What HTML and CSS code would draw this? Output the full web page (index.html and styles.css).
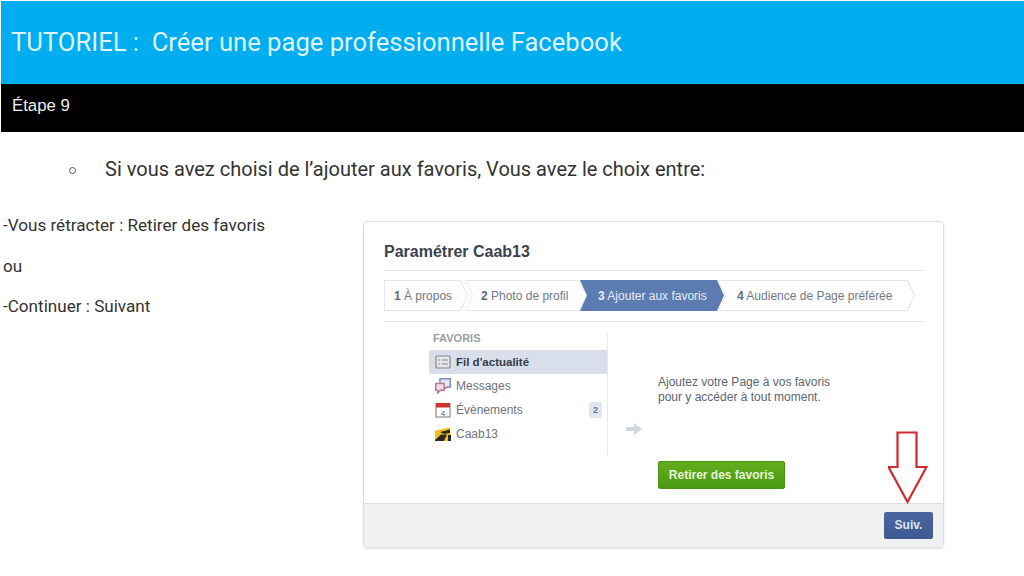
FILE: index.html
```html
<!DOCTYPE html>
<html lang="fr">
<head>
  <meta charset="UTF-8">
  <title>TUTORIEL : Créer une page professionnelle Facebook</title>
  <link rel="stylesheet" href="styles.css">
</head>
<body>
  <header class="title-bar">TUTORIEL :&nbsp; Créer une page professionnelle Facebook</header>
  <div class="step-bar">Étape 9</div>

  <p class="lead"><span class="bullet"></span>Si vous avez choisi de l’ajouter aux favoris, Vous avez le choix entre:</p>

  <main class="content">
    <div class="notes">
      <p>-Vous rétracter : Retirer des favoris</p>
      <p>ou</p>
      <p>-Continuer : Suivant</p>
    </div>

    <!-- Facebook dialog capture -->
    <div class="dialog">
      <div class="dialog-body">
        <h2 class="dialog-title">Paramétrer Caab13</h2>

        <ol class="steps">
          <li class="step step-1"><b>1</b> À propos</li>
          <li class="step step-2"><b>2</b> Photo de profil</li>
          <li class="step step-3"><b>3</b> Ajouter aux favoris</li>
          <li class="step step-4"><b>4</b> Audience de Page préférée</li>
        </ol>

        <div class="panel">
          <div class="side">
            <div class="side-head">FAVORIS</div>
            <div class="side-row selected">
              <svg class="side-icon" viewBox="0 0 16 16"><rect x="1" y="2" width="14" height="12" rx="1" fill="#e6e8ec" stroke="#85888e" stroke-width="1.200"/><path d="M3 6h2M3 10h2M6.500 6H13M6.500 10H13" stroke="#85888e"/></svg>
              <strong>Fil d'actualité</strong>
            </div>
            <div class="side-row">
              <svg class="side-icon" viewBox="0 0 16 16"><path d="M5 .8h10.200v8.400H11.500L9 11.500V9.200H5z" fill="#e6e9f4" stroke="#7f8cc0" stroke-width="1.500"/><path d="M.8 5.500h8.400v6.700H5.500L2.800 15v-2.800h-2z" fill="#f3dde5" stroke="#bb7d94" stroke-width="1.500"/></svg>
              Messages
            </div>
            <div class="side-row">
              <svg class="side-icon" viewBox="0 0 16 16"><rect x="1" y="1.500" width="14" height="13.500" fill="#fff" stroke="#70747c"/><rect x="1" y="1" width="14" height="4.500" fill="#c8352e"/><text x="8" y="13.500" class="cal-day">4</text></svg>
              Évènements
              <span class="count">2</span>
            </div>
            <div class="side-row">
              <svg class="side-icon" viewBox="0 0 16 16"><path d="M0 4.500 15 1.500 16 15H0z" fill="#f2c11d"/><path d="M0 14l6-5.500h6L9 15H0z" fill="#2a2a22"/><path d="M5 6l10-2.500V7L9 8z" fill="#2a2a22"/><path d="M13 9h3v6h-3z" fill="#2a2a22"/></svg>
              Caab13
            </div>
          </div>

          <div class="main-pane">
            <svg class="pane-arrow" viewBox="0 0 16 12"><path d="M0 4h8V0l8 6-8 6V8H0z" fill="#d3d6da"/></svg>
            <div class="pane-text">
              <p>Ajoutez votre Page à vos favoris<br>pour y accéder à tout moment.</p>
              <span class="btn-green">Retirer des favoris</span>
            </div>
          </div>
        </div>
      </div>

      <div class="dialog-foot">
        <span class="btn-next">Suiv.</span>
      </div>

      <svg class="red-arrow" viewBox="0 0 40 74"><path d="M9.500 1.500h19v34.500h10L19.500 71 .500 36h9z" fill="none" stroke="#cf2a32" stroke-width="2.200"/></svg>
    </div>
  </main>
</body>
</html>
```

FILE: styles.css
```css
* {
  box-sizing: border-box;
}

body {
  margin: 0;
  width: 1024px;
  height: 576px;
  overflow: hidden;
  background: #fff;
  color: #333;
  font-family: Roboto, "Liberation Sans", sans-serif;
}

.title-bar {
  height: 84px;
  margin: 1px 0 0 1px;
  padding-left: 10px;
  background: #00adee;
  color: #dff4fd;
  font-size: 25.600px;
  line-height: 82px;
}

.step-bar {
  height: 48px;
  margin-left: 1px;
  margin-top: -1px;
  padding-left: 11px;
  background: #000;
  color: #eee;
  font-family: "Liberation Sans", Arial, sans-serif;
  font-size: 16.800px;
  line-height: 43px;
}

.lead {
  display: flex;
  align-items: center;
  margin: 24px 0 0 69px;
  font-size: 20px;
  line-height: 26px;
}

.bullet {
  width: 7px;
  height: 7px;
  margin: 2px 29px 0 0;
  border: 1px solid #555;
  border-radius: 50%;
}

.content {
  display: flex;
  margin-top: 20px;
}

.notes {
  width: 363px;
  padding: 14px 0 0 3px;
  font-size: 17.100px;
}

.notes p {
  margin: 0 0 22px;
  line-height: 19px;
}

.notes p + p + p {
  margin-top: -1px;
}

.dialog {
  position: relative;
  width: 581px;
  height: 327px;
  margin-top: 19px;
  border: 1px solid #dcdee0;
  border-radius: 4px;
  box-shadow: 0 1px 2px rgba(0, 0, 0, 0.12);
}

.dialog-body {
  height: 281px;
  padding: 20px 20px 0;
}

.dialog-title {
  margin: 0;
  height: 29px;
  border-bottom: 1px solid #e2e3e6;
  color: #3b4250;
  font-family: "Liberation Sans", Arial, sans-serif;
  font-size: 16px;
  font-weight: bold;
  line-height: 19px;
}

.steps {
  display: flex;
  height: 31px;
  margin: 9px 0 0;
  padding: 0;
  list-style: none;
  font-family: "Liberation Sans", Arial, sans-serif;
  font-size: 12px;
  line-height: 33px;
  color: #737984;
}

/* chevrons: outer shape gives the border, ::before fills it */
.step {
  --notch: 7px;
  position: relative;
  z-index: 0;
  height: 31px;
  background: #e3e6ee;
  white-space: nowrap;
  clip-path: polygon(0 0, calc(100% - 7px) 0, 100% 50%, calc(100% - 7px) 100%, 0 100%, var(--notch) 50%);
}

.step::before {
  content: "";
  position: absolute;
  z-index: -1;
  inset: 1px;
  background: #fff;
  clip-path: polygon(0 0, calc(100% - 7px) 0, 100% 50%, calc(100% - 7px) 100%, 0 100%, var(--notch) 50%);
}

.step b {
  color: #5a6a8c;
}

.step-1 {
  --notch: 0px;
  width: 84px;
  padding-left: 10px;
}

.step-2 {
  width: 122px;
  margin-left: -3px;
  padding-left: 16px;
}

.step-3 {
  width: 144px;
  margin-left: -7px;
  padding-left: 18px;
  background: #5c7bb0;
  color: #e8edf5;
}

.step-3::before {
  display: none;
}

.step-3 b {
  color: #e8edf5;
}

.step-4 {
  width: 197px;
  margin-left: -6px;
  padding-left: 19px;
}

.panel {
  display: flex;
  height: 181px;
  margin-top: 10px;
  padding-left: 45px;
  border-top: 1px solid #e2e3e6;
  font-family: "Liberation Sans", Arial, sans-serif;
}

.side {
  width: 179px;
  height: 122px;
  margin-top: 11px;
  border-right: 1px solid #e9eaed;
  color: #6f7480;
  font-size: 12px;
}

.side-head {
  height: 17px;
  padding-left: 4px;
  color: #9a9fa8;
  font-size: 11px;
  font-weight: bold;
  line-height: 10px;
}

.side-row {
  display: flex;
  align-items: center;
  height: 24px;
  padding-bottom: 1px;
}

.side-row.selected {
  background: #d8dfea;
  border-radius: 2px 0 0 2px;
  color: #333b4a;
  font-size: 11.500px;
}

.side-icon {
  width: 16px;
  height: 16px;
  margin: 0 5px 0 6px;
}

.cal-day {
  font-size: 8px;
  fill: #555;
  text-anchor: middle;
}

.count {
  width: 13px;
  height: 16px;
  margin-left: auto;
  margin-right: 5px;
  background: #e0e6f0;
  border-radius: 2px;
  color: #5b73a4;
  font-size: 9px;
  font-weight: bold;
  line-height: 16px;
  text-align: center;
}

.main-pane {
  display: flex;
  flex: 1;
}

.pane-arrow {
  width: 16px;
  height: 12px;
  margin: 101px 0 0 18px;
}

.pane-text {
  margin: 53px 0 0 16px;
  font-size: 12px;
  line-height: 15px;
  color: #5d6470;
}

.pane-text p {
  margin: 0 0 56px;
}

.btn-green {
  display: block;
  width: 127px;
  height: 28px;
  background: linear-gradient(#62ad1f, #4a9a10);
  border: 1px solid #4c9313;
  border-radius: 2px;
  color: #e8f3dc;
  font-size: 12px;
  font-weight: bold;
  line-height: 26px;
  text-align: center;
}

.dialog-foot {
  display: flex;
  justify-content: flex-end;
  height: 44px;
  padding: 8px 10px 0;
  background: #f1f1f2;
  border-top: 1px solid #dcdddf;
  font-family: "Liberation Sans", Arial, sans-serif;
}

.btn-next {
  width: 49px;
  height: 27px;
  background: linear-gradient(#4a669e, #3f5a92);
  border-radius: 2px;
  color: #dfe5f0;
  font-size: 12px;
  font-weight: bold;
  line-height: 27px;
  text-align: center;
}

/* annotation drawn over the capture */
.red-arrow {
  position: absolute;
  left: 524px;
  top: 209px;
  width: 40px;
  height: 74px;
}
```
